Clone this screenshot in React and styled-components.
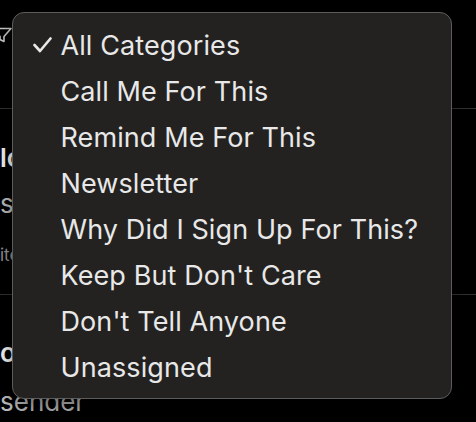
import React from "react";
import styled, { createGlobalStyle } from "styled-components";

const GlobalStyle = createGlobalStyle`
  html, body {
    margin: 0;
    padding: 0;
    background: #000;
  }
  body {
    font-family: Inter, "Noto Sans", "Liberation Sans", sans-serif;
    -webkit-font-smoothing: antialiased;
  }
`;

const categories = [
    "All Categories",
    "Call Me For This",
    "Remind Me For This",
    "Newsletter",
    "Why Did I Sign Up For This?",
    "Keep But Don't Care",
    "Don't Tell Anyone",
    "Unassigned",
];

const Screen = styled.div`
    position: relative;
    width: 476px;
    height: 422px;
    overflow: hidden;
    background: #000;
`;

const Toolbar = styled.div`
    height: 109px;
    border-bottom: 1px solid #333;
    display: flex;
    align-items: flex-start;
    padding-top: 27px;
    box-sizing: border-box;
`;

const FilterIcon = styled.svg`
    margin-left: -8px;
    width: 20px;
    height: 16px;
    color: #cfcfcf;
`;

const SenderRow = styled.div`
    height: ${(p) => p.$height}px;
    border-bottom: ${(p) => (p.$last ? "none" : "1px solid #333")};
    box-sizing: border-box;
    padding-top: ${(p) => p.$top}px;
    display: flex;
    flex-direction: column;
    white-space: nowrap;
`;

const SenderName = styled.div`
    font-size: 26px;
    font-weight: 600;
    color: #fff;
    line-height: 32px;
`;

const SenderSub = styled.div`
    font-size: 26px;
    color: #c4c4c4;
    line-height: 32px;
    margin-top: ${(p) => p.$gap}px;
`;

const SenderDetail = styled.div`
    font-size: 17px;
    color: #9a9a9a;
    line-height: 22px;
    margin-top: 24px;
`;

const Menu = styled.div`
    position: absolute;
    left: 12px;
    top: 12px;
    width: 440px;
    height: 387px;
    box-sizing: border-box;
    background: #232220;
    border: 1.5px solid #5c5c5c;
    border-radius: 12px;
    padding: 9px 0 8px;
    box-shadow: 0 8px 24px rgba(0, 0, 0, 0.5);
`;

const MenuItem = styled.div`
    height: 46px;
    display: flex;
    align-items: center;
    padding-left: 19.5px;
    font-size: 27px;
    color: #e8e8e8;
    letter-spacing: 0.1px;
    white-space: nowrap;
`;

const CheckSlot = styled.span`
    width: 28px;
    height: 20px;
    display: inline-flex;
    align-items: center;
    flex-shrink: 0;
`;

const Check = () => (
    <svg width="19" height="16" viewBox="0 0 19 16" fill="none">
        <polyline
            points="1.5,8 7,14 17.5,1.5"
            stroke="#e8e8e8"
            strokeWidth="2.6"
            strokeLinecap="round"
            strokeLinejoin="round"
        />
    </svg>
);

const App = () => {
    return (
        <>
            <GlobalStyle />
            <Screen>
                <Toolbar>
                    <FilterIcon viewBox="0 0 20 16" fill="none">
                        <path
                            d="M1 1.5h18l-7 8v5l-4-2v-3z"
                            stroke="currentColor"
                            strokeWidth="1.6"
                            strokeLinejoin="round"
                        />
                    </FilterIcon>
                </Toolbar>
                <SenderRow $height={186} $top={33}>
                    <SenderName>lc</SenderName>
                    <SenderSub $gap={14}>s</SenderSub>
                    <SenderDetail>ite</SenderDetail>
                </SenderRow>
                <SenderRow $height={130} $top={42} $last>
                    <SenderName>o</SenderName>
                    <SenderSub $gap={17}>sender</SenderSub>
                </SenderRow>

                <Menu>
                    {categories.map((c, i) => (
                        <MenuItem key={c}>
                            <CheckSlot>{i === 0 && <Check />}</CheckSlot>
                            {c}
                        </MenuItem>
                    ))}
                </Menu>
            </Screen>
        </>
    );
};

export default App;
